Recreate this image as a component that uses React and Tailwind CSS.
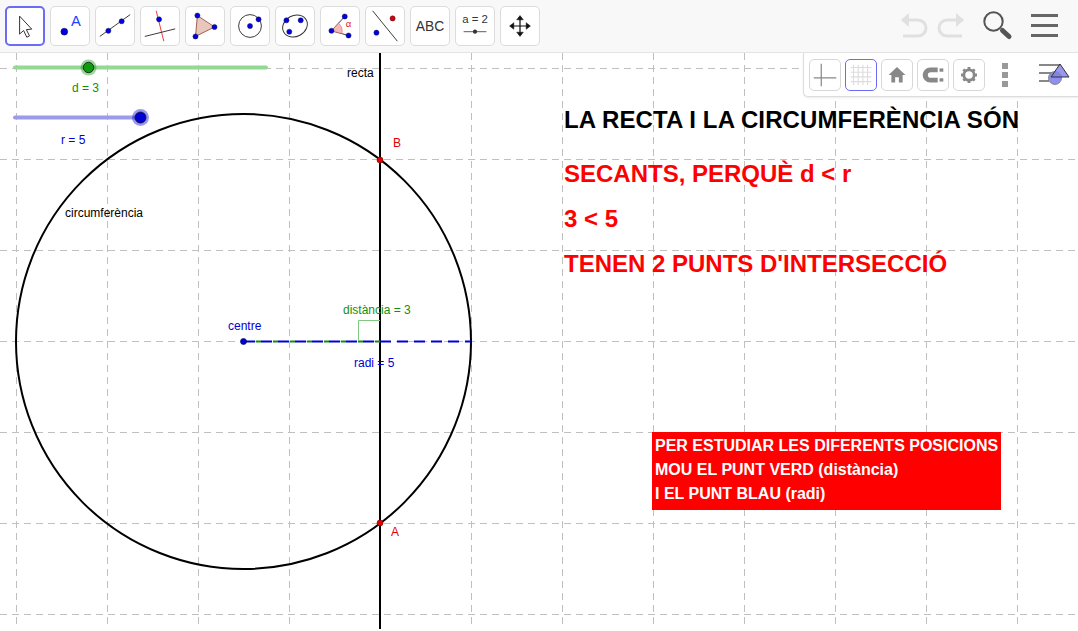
import React from 'react'

const gridX = [16, 107, 198, 289, 380, 471, 562, 653, 744, 835, 926, 1017]
const gridY = [68, 159, 250, 341, 432, 523, 614]

function Pt({ x, y, r = 2.7, fill = '#0000e0' }) {
  return <circle cx={x} cy={y} r={r} fill={fill} stroke="#1a1a4a" strokeWidth="0.5" />
}

const tools = [
  // move
  <path key="a" d="M14 9 L14 29 L18.5 25 L22 32.5 L25 31 L21.5 24 L27.5 23.5 Z" fill="#fff" stroke="#333" strokeWidth="1.1" strokeLinejoin="round" />,
  // point
  <g key="b">
    <circle cx="14" cy="26" r="3.6" fill="#0000e0" stroke="#1a1a4a" strokeWidth="0.6" />
    <text x="21" y="20" fontSize="15.5" fill="#2040ff" fontFamily="Liberation Sans">A</text>
  </g>,
  // line
  <g key="c">
    <path d="M4 31 L36 8" stroke="#333" strokeWidth="1" />
    <Pt x={13} y={25} /><Pt x={27} y={15} />
  </g>,
  // perpendicular
  <g key="d">
    <path d="M16 4 L24 36" stroke="#f03030" strokeWidth="1" />
    <path d="M4 31 L36 23" stroke="#333" strokeWidth="1" />
    <Pt x={19} y={13} />
  </g>,
  // polygon
  <g key="e">
    <path d="M12 9 L30 21 L10 31 Z" fill="#e8c8bc" stroke="#a05a48" strokeWidth="1" />
    <Pt x={12} y={9} /><Pt x={30} y={21} /><Pt x={10} y={31} />
  </g>,
  // circle
  <g key="f">
    <circle cx="20" cy="20" r="12" fill="none" stroke="#333" strokeWidth="1" />
    <Pt x={20} y={20} /><Pt x={29} y={13} />
  </g>,
  // conic
  <g key="g">
    <ellipse cx="20" cy="20" rx="13.5" ry="11" transform="rotate(-28 20 20)" fill="none" stroke="#333" strokeWidth="1" />
    <Pt x={11} y={14} /><Pt x={26} y={14} /><Pt x={14} y={26} />
  </g>,
  // angle
  <g key="h">
    <path d="M11 25 L25 10 M11 25 L29 30" stroke="#333" strokeWidth="1" fill="none" />
    <path d="M11 25 L18.5 17 A11.5 11.5 0 0 1 22 28 Z" fill="#f4b8b8" stroke="#e06060" strokeWidth="0.6" />
    <Pt x={11} y={25} /><Pt x={25} y={10} /><Pt x={29} y={30} />
    <text x="26" y="21" fontSize="10" fill="#e02020" fontFamily="Liberation Sans">α</text>
  </g>,
  // reflect
  <g key="i">
    <path d="M7 4 L33 36" stroke="#333" strokeWidth="1" />
    <Pt x={11} y={27} /><Pt x={28} y={12} fill="#e00000" />
  </g>,
  // text
  <text key="j" x="20" y="25.5" textAnchor="middle" fontSize="14.5" fill="#333" fontFamily="Liberation Sans">ABC</text>,
  // slider
  <g key="k">
    <text x="20" y="17" textAnchor="middle" fontSize="12" fill="#333" fontFamily="Liberation Sans">a = 2</text>
    <path d="M8 26 L32 26" stroke="#555" strokeWidth="1" />
    <circle cx="20" cy="26" r="2.2" fill="#333" />
  </g>,
  // move view
  <g key="l" stroke="#111" fill="#111">
    <path d="M20 11 L20 29 M11 20 L29 20" strokeWidth="1.3" />
    <path d="M20 9 L16.5 13.5 L23.5 13.5 Z M20 31 L16.5 26.5 L23.5 26.5 Z M9 20 L13.5 16.5 L13.5 23.5 Z M31 20 L26.5 16.5 L26.5 23.5 Z" strokeWidth="0.5" />
  </g>,
]

const styleIcons = [
  <path key="a" d="M4 19 H28 M12 4 V28" stroke="#888" strokeWidth="1.3" fill="none" />,
  <path key="b" d="M8 5 V27 M13 5 V27 M18 5 V27 M23 5 V27 M5 8 H27 M5 13 H27 M5 18 H27 M5 23 H27" stroke="#ddd" strokeWidth="1.2" fill="none" />,
  <path key="c" d="M16 7.5 L7 16 H10 V24 H14 V18.5 H18 V24 H22 V16 H25 Z" fill="#888" />,
  <g key="d" fill="#888">
    <path d="M21 8 H13 A8 8 0 0 0 13 24 H21 V19 H13.5 A3 3 0 0 1 13.5 13 H21 Z" />
    <rect x="23" y="9" width="4" height="3.5" />
    <rect x="23" y="19.5" width="4" height="3.5" />
  </g>,
  <g key="e">
    <circle cx="16" cy="16" r="5.5" fill="none" stroke="#888" strokeWidth="3" />
    <path d="M16 7.5 V10 M16 22 V24.5 M7.5 16 H10 M22 16 H24.5 M10 10 L11.8 11.8 M20.2 20.2 L22 22 M22 10 L20.2 11.8 M11.8 20.2 L10 22" stroke="#888" strokeWidth="3" />
  </g>,
]

function Toolbar() {
  return (
    <header className="h-[53px] shrink-0 flex items-center gap-[5px] pl-[5px] pb-px bg-[#f8f8f8] border-b border-[#e4e4e4]">
      {tools.map((icon, i) => (
        <button
          key={i}
          className={
            i === 0
              ? 'w-10 h-10 bg-white rounded-[5px] border-2 border-[#6a6cf6]'
              : 'w-10 h-10 bg-white rounded-[5px] border border-[#dcdcdc]'
          }
        >
          <svg viewBox="0 0 40 40" className="w-full h-full">{icon}</svg>
        </button>
      ))}
      <div className="ml-auto flex items-center gap-[17px] pr-[20px]">
        <div className="flex items-center gap-[5px] -mr-[2px]">
          <svg width="32" height="28" viewBox="0 0 32 28" fill="none" stroke="#e0e0e0" strokeWidth="3">
            <path d="M4 8 H20 A8 8 0 0 1 20 24 H5" />
            <path d="M11 1 L3 8 L11 15" fill="#e0e0e0" stroke="none" />
          </svg>
          <svg width="32" height="28" viewBox="0 0 32 28" fill="none" stroke="#e0e0e0" strokeWidth="3">
            <path d="M28 8 H12 A8 8 0 0 0 12 24 H27" />
            <path d="M21 1 L29 8 L21 15" fill="#e0e0e0" stroke="none" />
          </svg>
        </div>
        <svg width="32" height="32" viewBox="0 0 32 32" fill="none">
          <circle cx="11.5" cy="11.5" r="9.2" stroke="#555" strokeWidth="2" />
          <path d="M20.5 20.5 L27 26.5" stroke="#555" strokeWidth="5" strokeLinecap="round" />
        </svg>
        <div className="flex flex-col gap-[6.5px] w-[27px]">
          <span className="h-[3.5px] bg-[#666]" />
          <span className="h-[3.5px] bg-[#666]" />
          <span className="h-[3.5px] bg-[#666]" />
        </div>
      </div>
    </header>
  )
}

function StylePanel() {
  return (
    <div className="absolute right-0 top-0 w-[275px] h-[44px] flex items-center gap-1 pl-[5px] bg-white rounded-bl-[5px] border-l border-b border-[#dcdcdc] shadow-[0_1px_2px_rgba(0,0,0,0.08)]">
      {styleIcons.map((icon, i) => (
        <button
          key={i}
          className={
            i === 1
              ? 'w-8 h-8 rounded-[5px] border border-[#6a6cf6] bg-white'
              : 'w-8 h-8 rounded-[5px] border border-[#d8d8d8] bg-white'
          }
        >
          <svg viewBox="0 0 32 32" className="w-full h-full">{icon}</svg>
        </button>
      ))}
      <div className="ml-[13px] flex flex-col gap-[3px]">
        <span className="w-[6px] h-[6px] bg-[#999]" />
        <span className="w-[6px] h-[6px] bg-[#999]" />
        <span className="w-[6px] h-[6px] bg-[#999]" />
      </div>
      <svg width="34" height="30" viewBox="0 0 34 30" className="ml-[27px]">
        <path d="M0 5 H21 M0 13 H14 M0 21 H10" stroke="#888" strokeWidth="2" />
        <circle cx="16" cy="18" r="6.5" fill="#8f90ee" stroke="#777" strokeWidth="0.8" />
        <path d="M21 4 L30 17 H12 Z" fill="#7f80e6" fillOpacity="0.8" stroke="#333" strokeWidth="1" />
      </svg>
    </div>
  )
}

// y values are relative to the canvas, which starts under the 53px toolbar
function Construction() {
  const off = 53
  return (
    <svg className="absolute left-0 top-0 w-[1078px] h-[576px]" viewBox="0 0 1078 576">
      {gridX.map((x) => (
        <path key={x} d={`M${x + 0.5} 0 V576`} stroke="#c0c0c0" strokeWidth="1" strokeDasharray="7 5" />
      ))}
      {gridY.map((y) => (
        <path key={y} d={`M0 ${y - off + 0.5} H1078`} stroke="#c0c0c0" strokeWidth="1" strokeDasharray="7 5" />
      ))}

      {/* circle and line */}
      <circle cx="243.5" cy={341.5 - off} r="227.5" fill="none" stroke="#000" strokeWidth="2" />
      <path d={`M380 0 V576`} stroke="#000" strokeWidth="2" />

      {/* radius + distance */}
      <path d={`M244 ${341.5 - off} H471`} stroke="#0000d8" strokeWidth="2" strokeDasharray="11 6" />
      <path d={`M244 ${341.5 - off} H380`} stroke="#109010" strokeWidth="2" strokeDasharray="5 12" strokeDashoffset="5" />
      <path d={`M358.5 ${341 - off} V${320.5 - off} H380`} fill="none" stroke="#7fc87f" strokeWidth="1" />
      <circle cx="243.5" cy={341.5 - off} r="3" fill="#0000d8" stroke="#101050" strokeWidth="0.7" />

      {/* intersections */}
      <circle cx="380" cy={160 - off} r="3" fill="#e00000" stroke="#800000" strokeWidth="0.6" />
      <circle cx="380" cy={523 - off} r="3" fill="#e00000" stroke="#800000" strokeWidth="0.6" />

      {/* sliders */}
      <path d={`M15 ${67.5 - off} H266`} stroke="#93d893" strokeWidth="4" strokeLinecap="round" />
      <circle cx="88.5" cy={67.5 - off} r="8" fill="#109010" fillOpacity="0.4" />
      <circle cx="88.5" cy={67.5 - off} r="5.2" fill="#109a10" stroke="#111" strokeWidth="0.8" />
      <path d={`M15 ${117.5 - off} H140`} stroke="#9b9bea" strokeWidth="4" strokeLinecap="round" />
      <circle cx="140.5" cy={117.5 - off} r="8.5" fill="#0000d8" fillOpacity="0.4" />
      <circle cx="140.5" cy={117.5 - off} r="5.5" fill="#0000d8" stroke="#111" strokeWidth="0.8" />
    </svg>
  )
}

function Label({ className, children }) {
  return <span className={'absolute text-[12px] leading-[14px] whitespace-nowrap ' + className}>{children}</span>
}

export default function App() {
  return (
    <div className="h-screen w-full flex flex-col overflow-hidden bg-white font-['Liberation_Sans',Arial,sans-serif]">
      <Toolbar />
      <main className="relative flex-1">
        <Construction />
        <StylePanel />

        <Label className="left-[72px] top-[28px] text-[#109010]">d = 3</Label>
        <Label className="left-[61px] top-[80px] text-[#0000d8]">r = 5</Label>
        <Label className="left-[347px] top-[13px] text-black">recta</Label>
        <Label className="left-[393px] top-[83px] text-[#e00000]">B</Label>
        <Label className="left-[391px] top-[472px] text-[#e00000]">A</Label>
        <Label className="left-[65px] top-[153px] text-black">circumferència</Label>
        <Label className="left-[228px] top-[266px] text-[#0000d8]">centre</Label>
        <Label className="left-[343px] top-[250px] text-[#109010]">distància = 3</Label>
        <Label className="left-[354px] top-[303px] text-[#0000d8]">radi = 5</Label>

        <div className="absolute left-[564px] top-[52px] text-[24px] leading-[30px] tracking-[0.1px] font-bold text-black whitespace-nowrap">
          LA RECTA I LA CIRCUMFERÈNCIA SÓN
        </div>
        <div className="absolute left-[564px] top-[106px] flex flex-col gap-[15px] text-[24px] leading-[30px] font-bold text-[#ff0000] whitespace-nowrap">
          <div>SECANTS, PERQUÈ d &lt; r</div>
          <div>3 &lt; 5</div>
          <div>TENEN 2 PUNTS D'INTERSECCIÓ</div>
        </div>

        <div className="absolute left-[652px] top-[379px] w-[349px] h-[78px] pl-[3px] pt-[2px] bg-[#ff0000] text-white font-bold text-[16px] leading-[24px] whitespace-nowrap">
          <div>PER ESTUDIAR LES DIFERENTS POSICIONS</div>
          <div>MOU EL PUNT VERD (distància)</div>
          <div>I EL PUNT BLAU (radi)</div>
        </div>
      </main>
    </div>
  )
}
